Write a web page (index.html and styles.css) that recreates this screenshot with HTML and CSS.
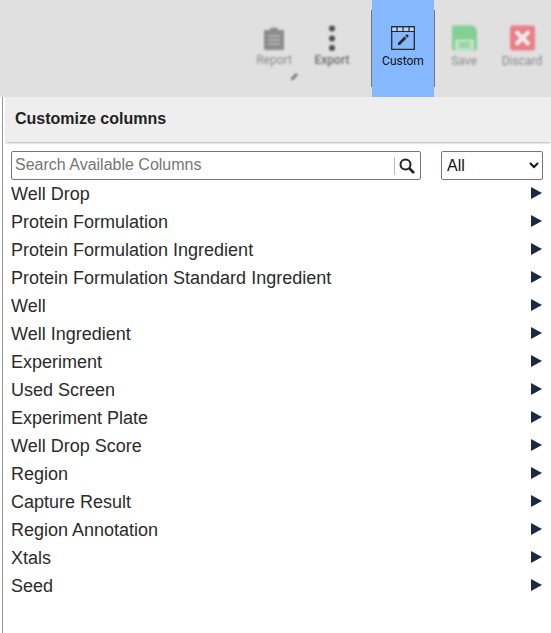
FILE: index.html
```html
<!DOCTYPE html>
<html lang="en">
<head>
<meta charset="utf-8">
<title>Customize columns</title>
<link rel="stylesheet" href="styles.css">
</head>
<body>
<header class="toolbar">
  <div class="tool disabled">
    <svg class="icon" width="24" height="26" viewBox="0 0 24 26"><path fill="#8c8c8c" d="M8 3h2.500a1.800 1.800 0 0 1 3 0H16v2h5a1 1 0 0 1 1 1v18a1 1 0 0 1-1 1H3a1 1 0 0 1-1-1V6a1 1 0 0 1 1-1h5z"/><path fill="#b0b0b0" d="M6 10h12v2H6zm0 4h12v2H6zm0 4h12v2H6z"/></svg>
    <span class="label">Report</span>
    <svg class="corner" width="8" height="8" viewBox="0 0 8 8"><path fill="#777" d="M0 8V6l5-5 2 2-5 5z"/></svg>
  </div>
  <div class="tool disabled soft">
    <svg class="icon" width="24" height="26" viewBox="0 0 24 26"><circle cx="12" cy="3.500" r="3" fill="#4d4d4d"/><circle cx="12" cy="13.500" r="3" fill="#4d4d4d"/><circle cx="12" cy="23" r="3" fill="#4d4d4d"/></svg>
    <span class="label label-dark">Export</span>
  </div>
  <div class="tool tool-custom">
    <svg class="icon-custom" width="24" height="24" viewBox="0 0 24 24"><path fill="none" stroke="#2a2a2a" stroke-width="1.300" d="M.7.700h22.600v22.600H.7z"/><path fill="#c3d8f5" d="M1.400 2.200h21.200v2.600H1.400z"/><path stroke="#2a2a2a" stroke-width="1.200" d="M0 5.500h24M6 1v4M12 1v4M18 1v4"/><path fill="#2a2a2a" d="M7 19v-2l6.400-6.400 2 2L9 19zM14.200 9.800l1.300-1.300a.6.600 0 0 1 .9 0l1.100 1.100a.6.600 0 0 1 0 .9l-1.300 1.300z"/></svg>
    <span class="label">Custom</span>
  </div>
  <div class="tool tool-end disabled">
    <svg class="icon" width="25" height="25" viewBox="0 0 25 25"><path fill="#84cf94" d="M2 0h19l4 4v19a2 2 0 0 1-2 2H2a2 2 0 0 1-2-2V2a2 2 0 0 1 2-2z"/><path fill="#bfe4c7" d="M3 14h19v11H3z"/><path fill="#84cf94" d="M7 17h11v2H7zm0 3h11v2H7z"/></svg>
    <span class="label">Save</span>
  </div>
  <div class="tool tool-end disabled">
    <svg class="icon" width="25" height="25" viewBox="0 0 25 25"><rect width="25" height="25" rx="3" fill="#ea7f86"/><path stroke="#f4f0f0" stroke-width="4" d="M6 6l13 13M19 6L6 19"/></svg>
    <span class="label">Discard</span>
  </div>
</header>
<main class="panel">
  <h1 class="panel-title">Customize columns</h1>
  <div class="filters">
    <div class="search">
      <input class="search-input" type="text" placeholder="Search Available Columns">
      <span class="search-sep"></span>
      <svg class="search-icon" width="16" height="16" viewBox="0 0 16 16"><circle cx="6.500" cy="6.500" r="5" fill="none" stroke="#222" stroke-width="2"/><path stroke="#222" stroke-width="2.600" d="M10.200 10.200l4.800 4.800"/></svg>
    </div>
    <select class="scope"><option>All</option></select>
  </div>
  <ul class="groups">
    <li class="group">Well Drop</li>
    <li class="group">Protein Formulation</li>
    <li class="group">Protein Formulation Ingredient</li>
    <li class="group">Protein Formulation Standard Ingredient</li>
    <li class="group">Well</li>
    <li class="group">Well Ingredient</li>
    <li class="group">Experiment</li>
    <li class="group">Used Screen</li>
    <li class="group">Experiment Plate</li>
    <li class="group">Well Drop Score</li>
    <li class="group">Region</li>
    <li class="group">Capture Result</li>
    <li class="group">Region Annotation</li>
    <li class="group">Xtals</li>
    <li class="group">Seed</li>
  </ul>
</main>
</body>
</html>
```
FILE: styles.css
```css
* { box-sizing: border-box; }
html, body { height: 100%; }
body {
  margin: 0;
  display: flex;
  flex-direction: column;
  overflow: hidden;
  background: #fff;
  font-family: "Liberation Sans", Arial, sans-serif;
  color: #222;
}
.toolbar {
  flex: none;
  height: 97px;
  display: flex;
  justify-content: flex-end;
  background: #e0e0e0;
}
.tool {
  position: relative;
  width: 58px;
  display: flex;
  flex-direction: column;
  align-items: center;
  padding-top: 25px;
}
.icon { display: block; height: 26px; }
.icon-custom { display: block; margin: 1px 0; }
.label {
  margin-top: 2px;
  font: 12px/14px Roboto, sans-serif;
  color: #8a8a8a;
}
.label-dark { color: #6a6a6a; font-weight: 500; }
.disabled .icon, .disabled .label { filter: blur(1.300px); }
.soft .icon { filter: blur(.8px); }
.soft .label { filter: blur(1px); }
.tool-end .label { margin-top: 3px; }
.corner {
  position: absolute;
  left: 46px;
  top: 72px;
  filter: blur(1.200px);
}
.tool-custom {
  width: 62px;
  margin: 0 1px 0 11px;
  background: #86b8ff;
}
.tool-custom::before, .tool-custom::after {
  content: "";
  position: absolute;
  top: 10px;
  bottom: 10px;
  width: 1px;
  background: #777;
}
.tool-custom::before { left: -1px; }
.tool-custom::after { right: -1px; }
.tool-custom .label { color: #111; margin-top: 3px; }
.panel {
  flex: 1;
  margin-left: 2px;
  border-left: 1px solid #999;
  padding-left: 2px;
}
.panel-title {
  margin: 0;
  height: 45px;
  padding-left: 10px;
  font-size: 16px;
  line-height: 43px;
  font-weight: 700;
  color: #222;
  background: #eee;
  box-shadow: 0 2px 2px -1px rgba(0, 0, 0, .3);
}
.filters {
  display: flex;
  gap: 20px;
  margin: 9px 8px 0 6px;
}
.search {
  width: 410px;
  height: 29px;
  display: flex;
  align-items: center;
  border: 1px solid #767676;
  border-radius: 2px;
}
.search-input {
  flex: 1;
  min-width: 0;
  height: 100%;
  border: 0;
  outline: 0;
  padding: 0 3px 2px;
  background: transparent;
  font: 16px "Liberation Sans", Arial, sans-serif;
}
.search-input::placeholder { color: #757575; opacity: 1; }
.search-sep { width: 1px; height: 18px; background: #bbb; }
.search-icon { margin: 0 5px 0 4px; }
.scope {
  width: 102px;
  height: 29px;
  padding: 0 0 0 1px;
  border: 1px solid #767676;
  border-radius: 2px;
  background: #fff;
  color: #111;
  font: 16px "Liberation Sans", Arial, sans-serif;
}
.groups {
  list-style: none;
  margin: 0 8px 0 6px;
  padding: 0;
}
.group {
  position: relative;
  height: 28px;
  font-size: 18px;
  line-height: 28px;
  color: #2b2b2b;
}
.group::after {
  content: "";
  position: absolute;
  right: 1px;
  top: 7px;
  border-style: solid;
  border-width: 6.500px 0 6.500px 11px;
  border-color: transparent transparent transparent #1a2a3f;
}
```
